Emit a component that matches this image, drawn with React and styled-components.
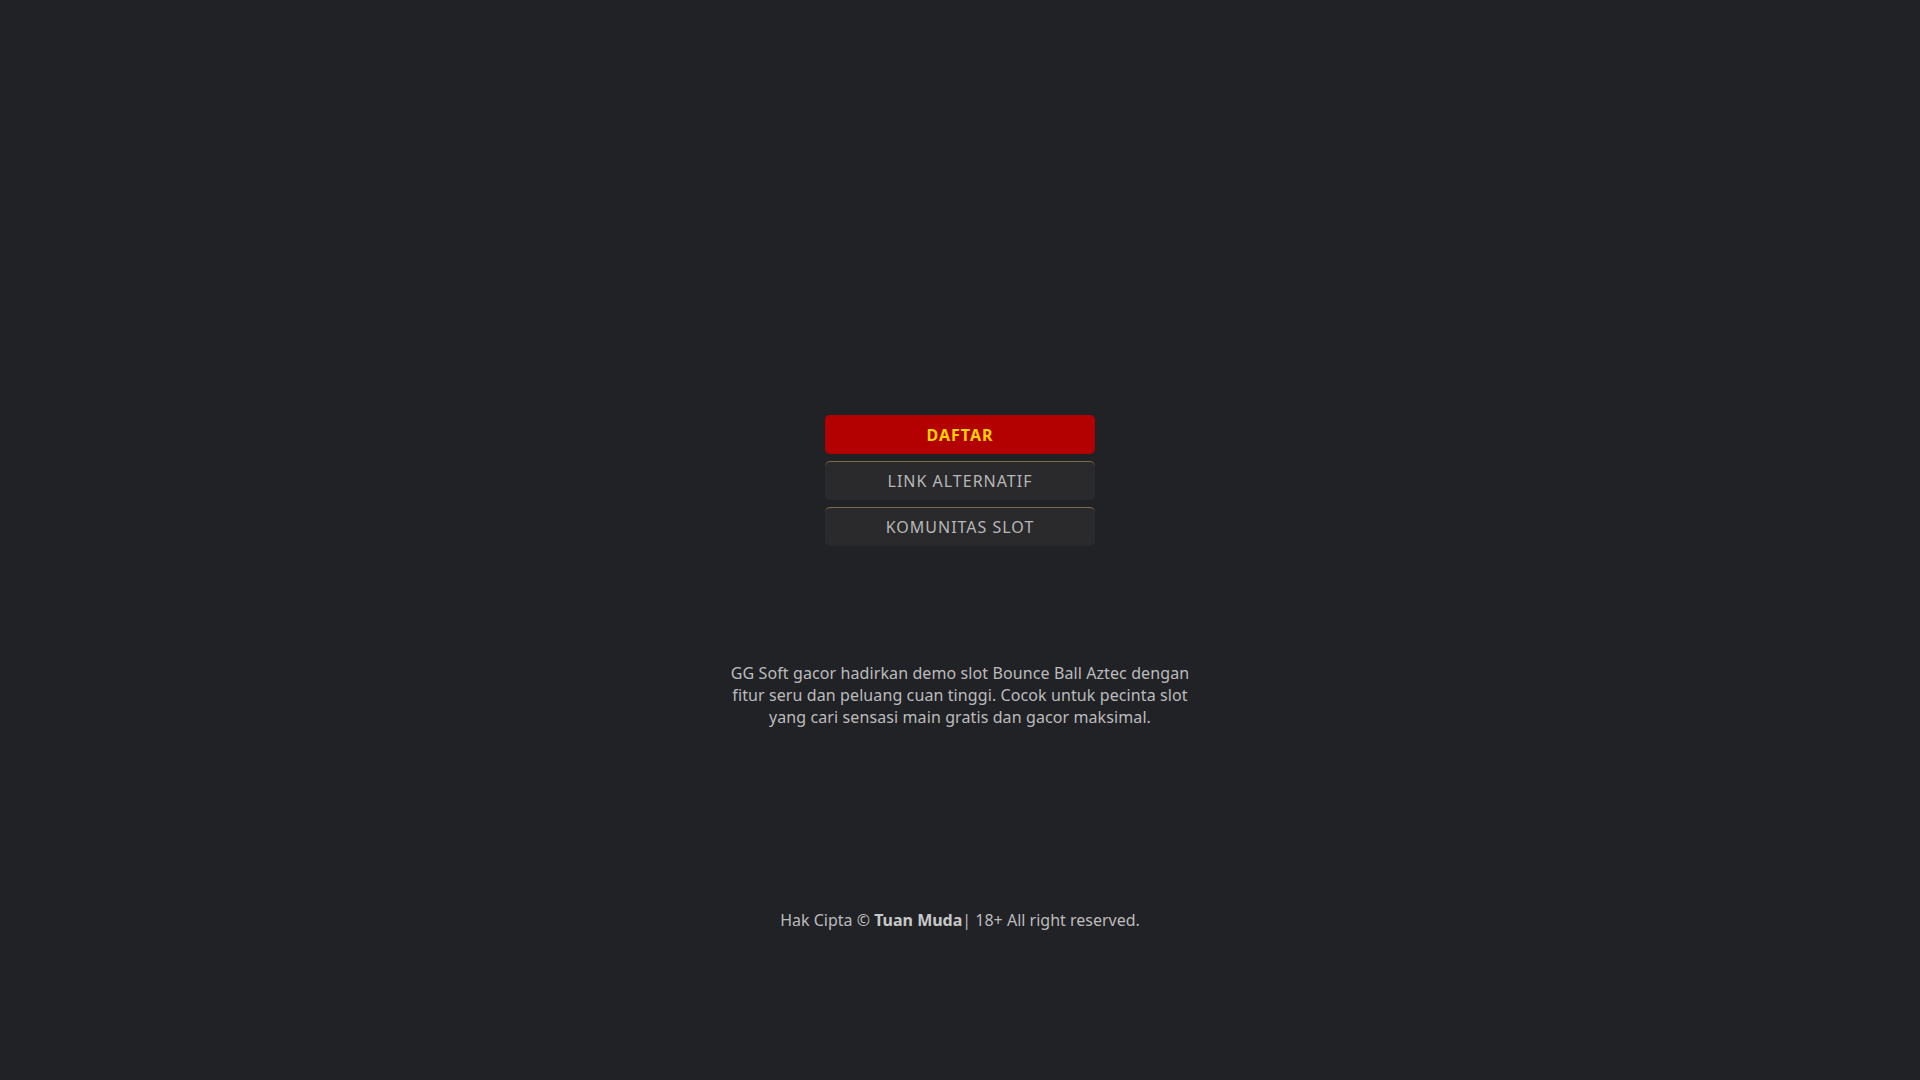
import React from "react";
import styled, { createGlobalStyle } from "styled-components";

const GlobalStyle = createGlobalStyle`
  html, body {
    margin: 0;
    padding: 0;
    background: #212226;
  }
  body {
    font-family: "Noto Sans", "Open Sans", sans-serif;
    color: #bdbdbd;
  }
`;

const links = [
  { label: "DAFTAR", primary: true },
  { label: "LINK ALTERNATIF" },
  { label: "KOMUNITAS SLOT" },
];

const App = () => {
  return (
    <>
      <GlobalStyle />
      <Page>
        <ButtonGroup>
          {links.map((l) => (
            <LinkButton key={l.label} href="#" $primary={l.primary}>
              {l.label}
            </LinkButton>
          ))}
        </ButtonGroup>
        <Description>
          GG Soft gacor hadirkan demo slot Bounce Ball Aztec dengan fitur seru
          dan peluang cuan tinggi. Cocok untuk pecinta slot yang cari sensasi
          main gratis dan gacor maksimal.
        </Description>
        <Footer>
          Hak Cipta © <strong>Tuan Muda</strong>| 18+ All right reserved.
        </Footer>
      </Page>
    </>
  );
};

export default App;

const Page = styled.main`
  min-height: 1080px;
  box-sizing: border-box;
  display: flex;
  flex-direction: column;
  align-items: center;
  padding-top: 415px;
`;

const ButtonGroup = styled.nav`
  display: flex;
  flex-direction: column;
  gap: 7px;
  width: 270px;
`;

const LinkButton = styled.a`
  display: flex;
  align-items: center;
  justify-content: center;
  height: 39px;
  box-sizing: border-box;
  border-radius: 5px;
  text-decoration: none;
  font-size: 16px;
  letter-spacing: 1px;
  background: ${(p) => (p.$primary ? "#b30000" : "#2a2a2c")};
  color: ${(p) => (p.$primary ? "#ffd200" : "#b8b8b8")};
  font-weight: ${(p) => (p.$primary ? 700 : 400)};
  border-top: ${(p) => (p.$primary ? "none" : "1px solid #7a6a4e")};
`;

const Description = styled.p`
  width: 470px;
  margin: 116px 0 0;
  text-align: center;
  font-size: 16px;
  letter-spacing: 0.1px;
  line-height: 22px;
  color: #bcbcbc;
`;

const Footer = styled.footer`
  margin-top: 181px;
  font-size: 16px;
  color: #bcbcbc;

  strong {
    color: #c8c8c8;
    font-weight: 700;
  }
`;
